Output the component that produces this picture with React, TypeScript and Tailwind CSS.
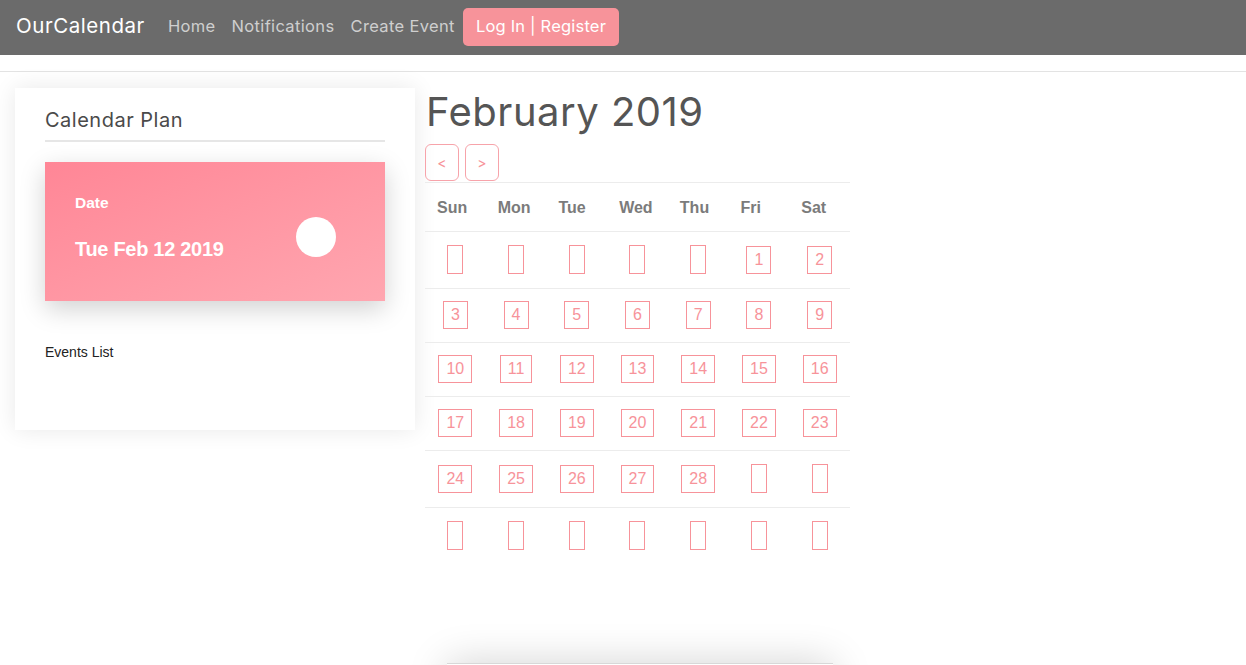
import React from "react";

const mont = "font-['Inter','Noto_Sans',sans-serif]";
const arial = "font-['Liberation_Sans',Arial,sans-serif]";

const weeks: (number | null)[][] = [
  [null, null, null, null, null, 1, 2],
  [3, 4, 5, 6, 7, 8, 9],
  [10, 11, 12, 13, 14, 15, 16],
  [17, 18, 19, 20, 21, 22, 23],
  [24, 25, 26, 27, 28, null, null],
  [null, null, null, null, null, null, null],
];
const rowH = ["h-[57px]", "h-[54px]", "h-[54px]", "h-[54px]", "h-[57px]", "h-[57px]"];
const days = ["Sun", "Mon", "Tue", "Wed", "Thu", "Fri", "Sat"];

export default function App() {
  return (
    <div className="min-h-[665px] w-full bg-white overflow-hidden relative">
      <nav className={`h-[55px] bg-[#6b6b6b] flex items-center pl-[16px] pb-[2px] ${mont}`}>
        <span className="text-white text-[20.5px] tracking-[0.55px] mr-[23px]">OurCalendar</span>
        <div className="flex items-center gap-[16px] text-[16.5px] text-[#cfcfcf] tracking-[0.35px]">
          <span>Home</span>
          <span>Notifications</span>
          <span>Create Event</span>
        </div>
        <button className="ml-[8px] h-[38px] px-[13px] rounded-[5px] bg-[#f7939a] text-white text-[16.5px] tracking-[0.2px]">
          Log In | Register
        </button>
      </nav>
      <div className="h-[16px]" />
      <div className="h-px bg-[#e3e3e3]" />
      <div className="flex pl-[15px] pt-[16px] gap-[10px]">
        <div className="w-[400px] h-[342px] bg-white shadow-[0_0_22px_rgba(0,0,0,0.09)] px-[30px] pt-[20px]">
          <div className={`${mont} text-[20px] text-[#4a4a4a] tracking-[0.5px] leading-[24px]`}>Calendar Plan</div>
          <div className="h-[2px] bg-[#e6e6e6] mt-[8px]" />
          <div className={`mt-[20px] h-[139px] bg-gradient-to-br from-[#ff8696] to-[#ffa6b0] shadow-[0_8px_24px_rgba(0,0,0,0.18)] flex items-start justify-between pl-[30px] pr-[49px] ${arial} text-white font-bold`}>
            <div className="flex flex-col pt-[32px]">
              <span className="text-[15.5px] leading-[18px]">Date</span>
              <span className="text-[20px] leading-[24px] mt-[25px] tracking-[-0.3px]">Tue Feb 12 2019</span>
            </div>
            <div className="w-[40px] h-[40px] rounded-full bg-white mt-[55px]" />
          </div>
          <div className={`${arial} text-[14px] text-[#222] mt-[41px]`}>Events List</div>
        </div>
        <div className="w-[425px] flex flex-col">
          <h1 className={`${mont} text-[40px] text-[#555] leading-[48px] ml-[1px] tracking-[0.5px]`}>February 2019</h1>
          <div className="flex gap-[6px] mt-[8px]">
            <button className={`w-[34px] h-[37px] border border-[#f7a3aa] rounded-[6px] text-[#f7939a] text-[14px] ${mont}`}>&lt;</button>
            <button className={`w-[34px] h-[37px] border border-[#f7a3aa] rounded-[6px] text-[#f7939a] text-[14px] ${mont}`}>&gt;</button>
          </div>
          <div className={`mt-px border-t border-[#ececec] ${arial}`}>
            <div className="grid grid-cols-7 h-[49px] items-center border-b border-[#ececec]">
              {days.map((d) => (
                <div key={d} className="pl-[12px] pt-[2px] font-bold text-[16px] text-[#7b7b7b]">{d}</div>
              ))}
            </div>
            {weeks.map((w, i) => (
              <div key={i} className={`grid grid-cols-7 items-center ${rowH[i]} ${i < 5 ? "border-b border-[#ececec]" : ""}`}>
                {w.map((n, j) => (
                  <div key={j} className="flex justify-center">
                    {n === null ? (
                      <div className="w-[16px] h-[29px] border border-[#f7939a] mt-[-2px]" />
                    ) : (
                      <div className="h-[28px] px-[7px] border border-[#f7939a] text-[#f7939a] text-[16px] flex items-center mt-[-1px]">
                        {n}
                      </div>
                    )}
                  </div>
                ))}
              </div>
            ))}
          </div>
        </div>
      </div>
      <div className="absolute left-[447px] top-[663px] w-[386px] h-[40px] bg-white border-t border-[#d8d8d8] shadow-[0_0_40px_rgba(0,0,0,0.18)]" />
    </div>
  );
}
